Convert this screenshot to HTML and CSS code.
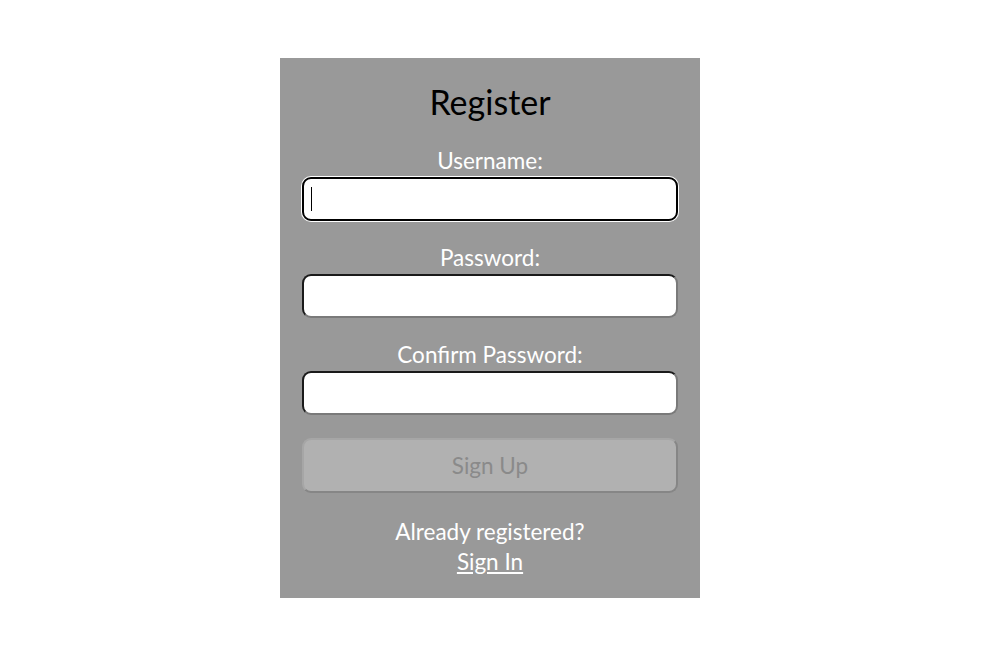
FILE: index.html
```html
<!DOCTYPE html>
<html lang="en">
<head>
<meta charset="utf-8">
<title>Register</title>
<link rel="stylesheet" href="styles.css">
</head>
<body>
<main class="page">
  <section class="card">
    <h1 class="title">Register</h1>
    <form class="form">
      <label class="label" for="username">Username:</label>
      <div class="input focused" id="username"><span class="caret"></span></div>
      <label class="label" for="password">Password:</label>
      <div class="input" id="password"></div>
      <label class="label" for="confirm">Confirm Password:</label>
      <div class="input" id="confirm"></div>
      <div class="button">Sign Up</div>
    </form>
    <p class="footer">Already registered?<br><a class="link" href="#">Sign In</a></p>
  </section>
</main>
</body>
</html>
```

FILE: styles.css
```css
html, body {
  margin: 0;
  padding: 0;
  background: #ffffff;
}
body {
  font-family: "Lato", "Open Sans", sans-serif;
}
.page {
  width: 980px;
  display: flex;
  justify-content: center;
  padding-top: 58px;
}
.card {
  width: 420px;
  height: 540px;
  box-sizing: border-box;
  background: #999999;
  padding: 0 22px;
  display: flex;
  flex-direction: column;
  align-items: stretch;
}
.title {
  margin: 24px 0 0;
  font-size: 34px;
  font-weight: 400;
  line-height: 40px;
  text-align: center;
  color: #000;
}
.form {
  display: flex;
  flex-direction: column;
  margin-top: 26px;
}
.label {
  display: block;
  text-align: center;
  color: #fff;
  font-size: 22.5px;
  line-height: 26px;
  margin-bottom: 3px;
}
.input {
  height: 44px;
  box-sizing: border-box;
  background: #fff;
  border: 2px solid;
  border-color: #1a1a1a #7a7a7a #7a7a7a #1a1a1a;
  border-radius: 9px;
  margin-bottom: 24px;
  position: relative;
}
.input.focused {
  border-color: #000;
  box-shadow: 0 0 0 1px #fff;
}
.caret {
  position: absolute;
  left: 7px;
  top: 8px;
  width: 1px;
  height: 24px;
  background: #000;
}
.button {
  margin-top: -1px;
  height: 55px;
  box-sizing: border-box;
  background: #b1b1b1;
  border: 2px solid;
  border-color: #a6a6a6 #868686 #868686 #a6a6a6;
  border-radius: 9px;
  color: #8a8a8a;
  font-size: 22.5px;
  display: flex;
  align-items: center;
  justify-content: center;
}
.footer {
  margin: 24px 0 0;
  text-align: center;
  color: #fff;
  font-size: 22.5px;
  line-height: 30px;
}
.link {
  color: #fff;
  text-decoration: underline;
}
```
